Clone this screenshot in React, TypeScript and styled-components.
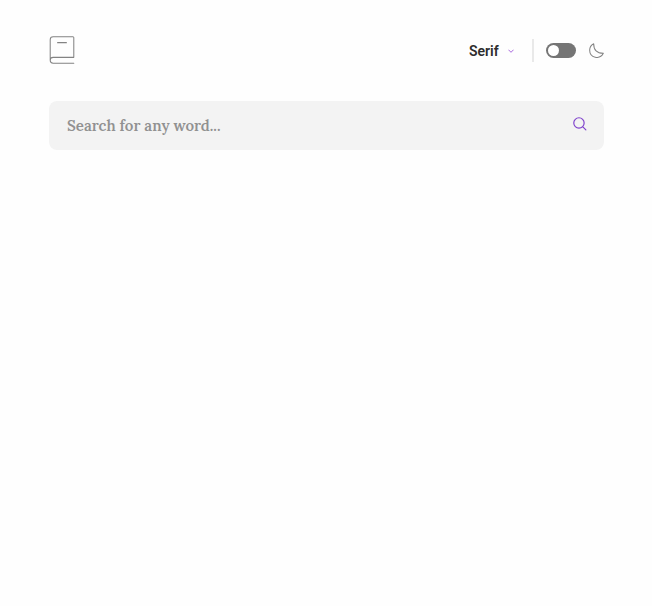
import { useState } from 'react';
import styled, { createGlobalStyle } from 'styled-components';

const GlobalStyle = createGlobalStyle`
  *, *::before, *::after { box-sizing: border-box; }
  body { margin: 0; background: #fefefe; color: #2d2d2d; font-family: Roboto, Arial, sans-serif; }
`;

const Page = styled.div`
  max-width: 834px;
  margin: 0 auto;
  padding: 36px 48px 48px 49px;
`;

const Header = styled.header`
  display: flex;
  align-items: flex-start;
  justify-content: space-between;
  margin-bottom: 36px;
`;

const Logo = styled.a`
  display: flex;
`;

const Controls = styled.div`
  display: flex;
  align-items: center;
  height: 29px;
`;

const FontPicker = styled.label`
  display: grid;
  grid-template-columns: 39px 6px;
  align-items: center;
`;

const FontSelect = styled.select`
  grid-area: 1 / 1 / 2 / 3;
  width: 100%;
  height: 23px;
  padding: 0;
  border: 0;
  appearance: none;
  background: transparent;
  color: #2d2d2d;
  font: 600 14px/22px Roboto, Arial, sans-serif;
  cursor: pointer;
`;

const Chevron = styled.svg`
  grid-area: 1 / 2;
  pointer-events: none;
`;

const Divider = styled.span`
  width: 2px;
  height: 23px;
  margin: 0 12px 0 18px;
  background: #e9e9e9;
`;

const ThemeToggle = styled.label`
  display: flex;
  align-items: center;
  gap: 13px;
  cursor: pointer;
`;

const Switch = styled.input`
  appearance: none;
  display: flex;
  align-items: center;
  width: 30px;
  height: 15px;
  margin: 0;
  padding: 0 2px;
  border-radius: 8px;
  background: #757575;
  cursor: pointer;

  &::before {
    content: "";
    width: 11px;
    height: 11px;
    border-radius: 50%;
    background: #fff;
  }

  &:checked {
    justify-content: flex-end;
    background: #a445ed;
  }
`;

const SearchBar = styled.form`
  display: flex;
  align-items: center;
  height: 49px;
  padding: 0 17px 0 18px;
  border-radius: 8px;
  background: #f3f3f3;
`;

const SearchInput = styled.input`
  flex: 1;
  min-width: 0;
  height: 100%;
  padding: 0;
  border: 0;
  outline: 0;
  background: transparent;
  color: #2d2d2d;
  font: 600 15px/24px Lora, "Liberation Serif", serif;

  &::placeholder { color: #919191; opacity: 1; }
`;

const SearchButton = styled.button`
  display: flex;
  padding: 0 0 4px;
  border: 0;
  background: transparent;
  cursor: pointer;
`;

export default function App() {
  const [font, setFont] = useState('Serif');
  const [dark, setDark] = useState(false);
  const [word, setWord] = useState('');

  return (
    <>
      <GlobalStyle />
      <Page>
        <Header>
          <Logo href="#" aria-label="Dictionary home">
            <svg width="26" height="28" viewBox="0 0 34 38" fill="none" stroke="#838383" strokeWidth="1.4" strokeLinecap="round">
              <path d="M1 33V5a4 4 0 0 1 4-4h26.8A1.2 1.2 0 0 1 33 2.2v26.2M5 29h28M5 37h28M5 37a4 4 0 1 1 0-8M11 9h12" />
            </svg>
          </Logo>
          <Controls>
            <FontPicker>
              <FontSelect aria-label="Font" value={font} onChange={(e) => setFont(e.target.value)}>
                <option>Serif</option>
                <option>Sans Serif</option>
                <option>Mono</option>
              </FontSelect>
              <Chevron width="6" height="4" viewBox="0 0 14 8" fill="none" stroke="#9a50d8" strokeWidth="2">
                <path d="m1 1 6 6 6-6" />
              </Chevron>
            </FontPicker>
            <Divider />
            <ThemeToggle>
              <Switch type="checkbox" aria-label="Dark theme" checked={dark} onChange={(e) => setDark(e.target.checked)} />
              <svg width="15" height="15" viewBox="0 0 22 22" fill="none" stroke="#838383" strokeWidth="1.5" strokeLinecap="round" strokeLinejoin="round">
                <path d="M1 10.449a10.544 10.544 0 0 0 19.993 4.686C11.544 15.135 6.858 10.448 6.858 1A10.545 10.545 0 0 0 1 10.449Z" />
              </svg>
            </ThemeToggle>
          </Controls>
        </Header>
        <SearchBar role="search" onSubmit={(e) => e.preventDefault()}>
          <SearchInput
            type="text"
            aria-label="Search for any word"
            placeholder="Search for any word..."
            value={word}
            onChange={(e) => setWord(e.target.value)}
          />
          <SearchButton type="submit" aria-label="Search">
            <svg width="14" height="14" viewBox="0 0 18 18" fill="none" stroke="#7f42cc" strokeWidth="1.5" strokeLinecap="round" strokeLinejoin="round">
              <path d="m12.663 12.663 3.887 3.887M1 7.664a6.665 6.665 0 1 0 13.33 0 6.665 6.665 0 0 0-13.33 0Z" />
            </svg>
          </SearchButton>
        </SearchBar>
      </Page>
    </>
  );
}
